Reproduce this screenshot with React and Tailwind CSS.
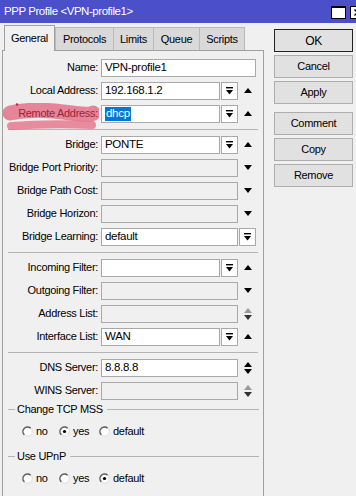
import React from "react";

const UpArrow = ({ color = "#000" }) => (
  <svg width="8" height="5" viewBox="0 0 8 5"><path d="M0 5 L4 0 L8 5 Z" fill={color} /></svg>
);
const DownArrow = ({ color = "#000" }) => (
  <svg width="8" height="5" viewBox="0 0 8 5"><path d="M0 0 L8 0 L4 5 Z" fill={color} /></svg>
);
const Stack = ({ up = "#000", down = "#000" }) => (
  <div className="flex flex-col items-center gap-[2px]">
    <UpArrow color={up} />
    <DownArrow color={down} />
  </div>
);

const DDIcon = () => (
  <svg width="7" height="8" viewBox="0 0 7 8">
    <rect x="0" y="0" width="7" height="1.4" fill="#000" />
    <path d="M0 3 L7 3 L3.5 7.5 Z" fill="#000" />
  </svg>
);

const Field = ({ w, value, disabled, children }) => (
  <div
    className={`h-[18px] border border-[#a9a9a9] px-[3px] flex items-center overflow-hidden whitespace-nowrap text-[11.5px] ${
      disabled ? "bg-[#f0f0f0]" : "bg-white"
    }`}
    style={{ width: w }}
  >
    {children ?? value}
  </div>
);

const DD = ({ ml = "ml-[1px]" }) => (
  <div className={`${ml} w-[17px] h-[18px] border border-[#a9a9a9] bg-white flex items-center justify-center`}>
    <DDIcon />
  </div>
);

const ArrowCell = ({ children }) => (
  <div className="ml-[2px] w-[16px] flex items-center justify-center">{children}</div>
);

const Row = ({ label, children, labelClass = "", overlay }) => (
  <div className="relative flex h-[23px] items-center">
    {overlay}
    <div className={`relative w-[95px] shrink-0 text-right ${labelClass}`}>{label}</div>
    <div className="ml-[3px] flex items-center">{children}</div>
  </div>
);

const Sep = () => (
  <div className="h-[8px] flex items-center">
    <div className="ml-[5px] w-[250px] h-px bg-[#b4b4b4]" />
  </div>
);

const Radio = ({ checked }) => (
  <svg width="11" height="11" viewBox="0 0 11 11">
    <circle cx="5.5" cy="5.5" r="4.8" fill="#fff" stroke="#dcdcdc" strokeWidth="1" />
    <path d="M8.6 2.2 A4.3 4.3 0 0 0 2.4 8.8" fill="none" stroke="#5e5e5e" strokeWidth="1.5" />
    {checked && <circle cx="5.5" cy="5.5" r="1.6" fill="#000" />}
  </svg>
);

const RadioRow = ({ sel }) => (
  <div className="mt-[4px] h-[22px] flex items-center pl-[19px]">
    {[
      ["no", "w-[37px]"],
      ["yes", "w-[40px]"],
      ["default", "w-[60px]"],
    ].map(([t, w]) => (
      <div key={t} className={`${w} flex items-center gap-[3px]`}>
        <Radio checked={sel === t} />
        <span>{t}</span>
      </div>
    ))}
  </div>
);

const GroupHeader = ({ title, mt }) => (
  <div className={`${mt} h-[14px] flex items-center`}>
    <div className="ml-[5px] w-[7px] h-px bg-[#b4b4b4]" />
    <span className="ml-[2px] mr-[4px] whitespace-nowrap">{title}</span>
    <div className="flex-1 mr-[4px] h-px bg-[#b4b4b4]" />
  </div>
);

const Button = ({ children, primary, className = "" }) => (
  <div
    className={`h-[23px] w-[79px] flex items-center justify-center bg-[#e1e1e1] ${
      primary ? "border-[1.5px] border-[#222]" : "border border-[#adadad]"
    } ${className}`}
  >
    {children}
  </div>
);

export default function App() {
  return (
    <div className="w-[356px] h-[496px] overflow-hidden bg-[#f0f0f0] text-black text-[11px] tracking-[-0.3px] font-['Liberation_Sans',Arial,sans-serif] leading-none">
      {/* Title bar */}
      <div className="h-[23px] bg-[#4b4fc9] flex items-center pl-[4px] text-white text-[11.5px] tracking-[-0.45px] overflow-hidden">
        <span className="whitespace-nowrap">PPP Profile &lt;VPN-profile1&gt;</span>
        <div className="ml-auto flex gap-[4px] -mr-[9px] mt-[2px]">
          <div className="w-[15px] h-[13px] bg-white border border-black border-t-2" />
          <div className="w-[15px] h-[13px] bg-white border border-black flex items-center justify-center">
            <svg width="7" height="7" viewBox="0 0 7 7">
              <path d="M0.5 0.5 L6.5 6.5 M6.5 0.5 L0.5 6.5" stroke="#000" strokeWidth="1.4" />
            </svg>
          </div>
        </div>
      </div>

      <div className="flex">
        {/* Left */}
        <div className="w-[266px] flex flex-col">
          <div className="h-[27px] flex items-end pl-[4px]">
            <div className="relative z-10 -mb-px w-[51px] h-[26px] bg-[#f0f0f0] border border-b-0 border-[#a0a0a0] flex items-center justify-center">
              General
            </div>
            <div className="w-[59px] h-[23px] bg-[#d9d9d9] border border-b-0 border-[#b9b9b9] flex items-center justify-center">
              Protocols
            </div>
            <div className="-ml-px w-[41px] h-[23px] bg-[#d9d9d9] border border-b-0 border-[#b9b9b9] flex items-center justify-center">
              Limits
            </div>
            <div className="-ml-px w-[47px] h-[23px] bg-[#d9d9d9] border border-b-0 border-[#b9b9b9] flex items-center justify-center">
              Queue
            </div>
            <div className="-ml-px w-[46px] h-[23px] bg-[#d9d9d9] border border-b-0 border-[#b9b9b9] flex items-center justify-center">
              Scripts
            </div>
          </div>

          <div className="ml-[2px] w-[262px] h-[450px] border border-[#a0a0a0] pt-[5px]">
            <Row label="Name:">
              <Field w={155} value="VPN-profile1" />
            </Row>
            <Row label="Local Address:">
              <Field w={119} value="192.168.1.2" />
              <DD />
              <ArrowCell><UpArrow /></ArrowCell>
            </Row>
            <Row
              label="Remote Address:"
              labelClass="text-[#9a2436]"
              overlay={
                <svg className="absolute left-0 top-[1px]" width="96" height="29" viewBox="0 0 96 29">
                  <path d="M7 10 Q 30 5 60 9 T 90 10" fill="none" stroke="#e46a83" strokeOpacity="0.8" strokeWidth="15" strokeLinecap="round" />
                  <path d="M8 23 Q 45 20 89 22" fill="none" stroke="#e46a83" strokeOpacity="0.75" strokeWidth="8" strokeLinecap="round" />
                  <circle cx="14" cy="1.5" r="1.2" fill="#d02040" />
                </svg>
              }
            >
              <Field w={119}>
                <span className="bg-[#0078d7] text-white h-[14px] flex items-center px-[1px]">dhcp</span>
              </Field>
              <DD />
              <ArrowCell><UpArrow /></ArrowCell>
            </Row>
            <Sep />
            <Row label="Bridge:">
              <Field w={119} value="PONTE" />
              <DD />
              <ArrowCell><UpArrow /></ArrowCell>
            </Row>
            <Row label="Bridge Port Priority:">
              <Field w={137} disabled />
              <ArrowCell><DownArrow /></ArrowCell>
            </Row>
            <Row label="Bridge Path Cost:">
              <Field w={137} disabled />
              <ArrowCell><DownArrow /></ArrowCell>
            </Row>
            <Row label="Bridge Horizon:">
              <Field w={137} disabled />
              <ArrowCell><DownArrow /></ArrowCell>
            </Row>
            <Row label="Bridge Learning:">
              <Field w={137} value="default" />
              <DD />
            </Row>
            <Sep />
            <Row label="Incoming Filter:">
              <Field w={119} />
              <DD />
              <ArrowCell><UpArrow /></ArrowCell>
            </Row>
            <Row label="Outgoing Filter:">
              <Field w={137} disabled />
              <ArrowCell><DownArrow /></ArrowCell>
            </Row>
            <Row label="Address List:">
              <Field w={137} disabled />
              <ArrowCell><Stack up="#9a9a9a" down="#333" /></ArrowCell>
            </Row>
            <Row label="Interface List:">
              <Field w={119} value="WAN" />
              <DD />
              <ArrowCell><UpArrow /></ArrowCell>
            </Row>
            <Sep />
            <Row label="DNS Server:">
              <Field w={137} value="8.8.8.8" />
              <ArrowCell><Stack /></ArrowCell>
            </Row>
            <Row label="WINS Server:">
              <Field w={137} disabled />
              <ArrowCell><Stack up="#9a9a9a" down="#333" /></ArrowCell>
            </Row>
            <GroupHeader title="Change TCP MSS" mt="" />
            <RadioRow sel="yes" />
            <GroupHeader title="Use UPnP" mt="mt-[7px]" />
            <RadioRow sel="default" />
          </div>
        </div>

        {/* Right buttons */}
        <div className="ml-[8px] pt-[6px] flex flex-col gap-[3px]">
          <Button primary className="text-[12px]">OK</Button>
          <Button>Cancel</Button>
          <Button>Apply</Button>
          <Button className="mt-[5px]">Comment</Button>
          <Button>Copy</Button>
          <Button>Remove</Button>
        </div>
      </div>
    </div>
  );
}
